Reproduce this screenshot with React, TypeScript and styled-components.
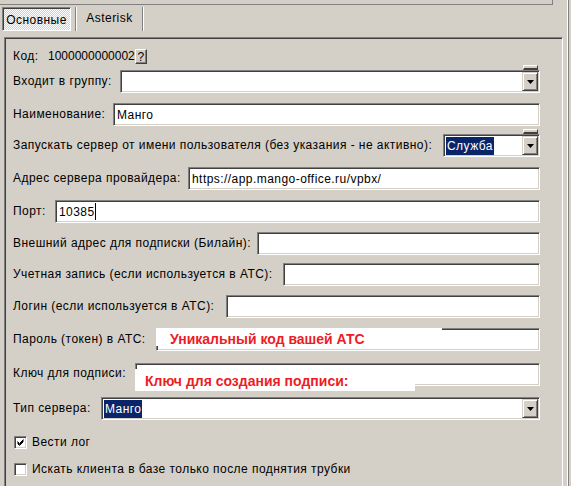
import React from 'react';
import styled, { createGlobalStyle } from 'styled-components';

const Global = createGlobalStyle`
  html, body { margin: 0; padding: 0; background: #d4d0c8; }
  body { font-family: "Liberation Sans", Arial, sans-serif; font-size: 12px; letter-spacing: 0.45px; color: #000; }
  #root { width: 571px; height: 486px; overflow: hidden; }
  * { box-sizing: border-box; }
`;

const Window = styled.div`
  display: flex;
  width: 571px;
  height: 486px;
  background: #d4d0c8;
  overflow: hidden;
`;

const Main = styled.div`
  width: 567px;
  display: flex;
  flex-direction: column;
`;

const RightFrame = styled.div`
  width: 2px;
  border-left: 1px solid #ffffff;
  border-right: 1px solid #808080;
`;

const TopStrip = styled.div`
  width: 553px;
  height: 5px;
  flex: none;
  border-bottom: 1px solid #808080;
  border-right: 1px solid #808080;
`;

const TabBar = styled.div`
  height: 32px;
  flex: none;
  display: flex;
  align-items: flex-start;
  padding: 2px 0 0 2px;
`;

const Tab = styled.div<{ $pressed?: boolean; $w: number }>`
  width: ${(p) => p.$w}px;
  height: 24px;
  display: flex;
  align-items: center;
  justify-content: center;
  padding-bottom: ${(p) => (p.$pressed ? 0 : 3)}px;
  ${(p) =>
    p.$pressed
      ? `
    border: 1px solid;
    border-color: #808080 #ffffff #ffffff #808080;
    box-shadow: inset 1px 1px #404040;
    background: repeating-conic-gradient(#ffffff 0 25%, #d4d0c8 0 50%) 0 0 / 2px 2px;
    padding-top: 2px;
  `
      : ''}
`;

const TabSep = styled.div<{ $ml: number }>`
  width: 2px;
  height: 24px;
  margin-left: ${(p) => p.$ml}px;
  border-left: 1px solid #808080;
  border-right: 1px solid #ffffff;
`;

const Panel = styled.div`
  margin-left: 4px;
  width: 559px;
  flex: 1;
  border-top: 1px solid #808080;
  border-left: 1px solid #808080;
  border-right: 1px solid #ffffff;
  box-shadow: inset 1px 1px #404040;
  padding: 10px 22px 0 8px;
  display: flex;
  flex-direction: column;
`;

const Row = styled.div<{ $mt: number; $h?: number }>`
  display: flex;
  align-items: center;
  height: ${(p) => p.$h ?? 23}px;
  margin-top: ${(p) => p.$mt}px;
  flex: none;
`;

const Label = styled.div<{ $w: number; $up?: number }>`
  width: ${(p) => p.$w}px;
  flex: none;
  white-space: nowrap;
  padding-bottom: ${(p) => p.$up ?? 2}px;
`;

const CodeValue = styled.span`
  white-space: nowrap;
  letter-spacing: 0;
`;

const HelpButton = styled.div`
  width: 12px;
  height: 15px;
  display: flex;
  align-items: center;
  justify-content: center;
  border: 1px solid;
  border-color: #ffffff #404040 #404040 #ffffff;
  box-shadow: inset -1px -1px #808080;
  font-size: 12px;
  line-height: 12px;
  letter-spacing: 0;
  margin-top: 1px;
`;

const sunken = `
  border: 1px solid;
  border-color: #808080 #ffffff #ffffff #808080;
  box-shadow: inset 1px 1px #404040, inset -1px -1px #d4d0c8;
`;

const Field = styled.div`
  position: relative;
  flex: 1;
  height: 23px;
  background: #ffffff;
  ${sunken}
  display: flex;
  align-items: center;
  padding: 1px 0 1px 3px;
  white-space: nowrap;
`;

const Caret = styled.span`
  display: inline-block;
  width: 1px;
  height: 17px;
  background: #000;
  margin-left: 0;
`;

const Combo = styled.div`
  position: relative;
  flex: 1;
  height: 23px;
  background: #ffffff;
  ${sunken}
  display: flex;
  align-items: stretch;
  padding: 1px;
`;

const ComboValue = styled.div`
  flex: 1;
  display: flex;
  align-items: center;
  padding-left: 1px;
`;

const Selected = styled.span`
  background: #0a246a;
  color: #ffffff;
  padding: 0 1px;
  line-height: 18px;
`;

const DropButton = styled.div`
  width: 16px;
  display: flex;
  align-items: center;
  justify-content: center;
  background: #d4d0c8;
  border: 1px solid;
  border-color: #d4d0c8 #404040 #404040 #d4d0c8;
  box-shadow: inset 1px 1px #ffffff, inset -1px -1px #808080;
`;

const GripTab = styled.div`
  position: absolute;
  top: -6px;
  right: 1px;
  width: 15px;
  height: 5px;
  background: #d4d0c8;
  border-top: 1px solid #ffffff;
  border-left: 1px solid #ffffff;
  border-right: 1px solid #404040;
  border-bottom: 2px solid #404040;
`;

const Annotation = styled.div<{ $l: number; $t: number; $w: number; $h: number; $pl: number; $pt: number }>`
  position: absolute;
  left: ${(p) => p.$l}px;
  top: ${(p) => p.$t}px;
  width: ${(p) => p.$w}px;
  height: ${(p) => p.$h}px;
  background: #ffffff;
  padding: ${(p) => p.$pt}px 0 0 ${(p) => p.$pl}px;
  color: #ee1c25;
  font-weight: bold;
  font-size: 14px;
  line-height: 16px;
  letter-spacing: 0;
  white-space: nowrap;
`;

const CheckRow = styled.div<{ $mt: number }>`
  display: flex;
  align-items: center;
  height: 13px;
  margin-top: ${(p) => p.$mt}px;
  padding-left: 1px;
  flex: none;
`;

const CheckBox = styled.div`
  width: 13px;
  height: 13px;
  background: #ffffff;
  ${sunken}
  display: flex;
  align-items: center;
  justify-content: center;
  margin-right: 5px;
`;

const CheckText = styled.span`
  white-space: nowrap;
  padding-bottom: 1px;
`;

const Arrow = () => (
  <svg width="7" height="4" viewBox="0 0 7 4">
    <polygon points="0,0 7,0 3.5,4" fill="#000" />
  </svg>
);

const Tick = () => (
  <svg width="7" height="7" viewBox="0 0 7 7">
    <path d="M0.5 2.5 L2.5 4.5 L6.5 0.5 M0.5 3.5 L2.5 5.5 L6.5 1.5 M0.5 4.5 L2.5 6.5 L6.5 2.5" stroke="#000" strokeWidth="1" fill="none" />
  </svg>
);

type ComboProps = { value: string; selected?: boolean; grip?: boolean };

const ComboBox = ({ value, selected, grip }: ComboProps) => (
  <Combo>
    {grip && <GripTab />}
    <ComboValue>{value && (selected ? <Selected>{value}</Selected> : value)}</ComboValue>
    <DropButton>
      <Arrow />
    </DropButton>
  </Combo>
);

const CheckItem = ({ mt, checked, text }: { mt: number; checked?: boolean; text: string }) => (
  <CheckRow $mt={mt}>
    <CheckBox>{checked && <Tick />}</CheckBox>
    <CheckText>{text}</CheckText>
  </CheckRow>
);

export default function App() {
  return (
    <>
      <Global />
      <Window>
        <Main>
          <TopStrip />
          <TabBar>
            <Tab $pressed $w={69}>Основные</Tab>
            <TabSep $ml={4} />
            <Tab $w={65}>Asterisk</Tab>
            <TabSep $ml={0} />
          </TabBar>
          <Panel>
            <Row $mt={0} $h={16}>
              <Label $w={35} $up={0}>Код:</Label>
              <CodeValue>1000000000002</CodeValue>
              <HelpButton>?</HelpButton>
            </Row>
            <Row $mt={6}>
              <Label $w={107}>Входит в группу:</Label>
              <ComboBox value="" grip />
            </Row>
            <Row $mt={10}>
              <Label $w={100}>Наименование:</Label>
              <Field>Манго</Field>
            </Row>
            <Row $mt={8}>
              <Label $w={430}>Запускать сервер от имени пользователя (без указания - не активно):</Label>
              <ComboBox value="Служба" selected grip />
            </Row>
            <Row $mt={10}>
              <Label $w={175}>Адрес сервера провайдера:</Label>
              <Field>https://app.mango-office.ru/vpbx/</Field>
            </Row>
            <Row $mt={10}>
              <Label $w={42}>Порт:</Label>
              <Field>
                10385
                <Caret />
              </Field>
            </Row>
            <Row $mt={9}>
              <Label $w={244}>Внешний адрес для подписки (Билайн):</Label>
              <Field />
            </Row>
            <Row $mt={8}>
              <Label $w={270}>Учетная запись (если используется в АТС):</Label>
              <Field />
            </Row>
            <Row $mt={9}>
              <Label $w={213}>Логин (если используется в АТС):</Label>
              <Field />
            </Row>
            <Row $mt={10}>
              <Label $w={143}>Пароль (токен) в АТС:</Label>
              <Field>
                <Annotation $l={-1} $t={-1} $w={286} $h={18} $pl={14} $pt={3}>
                  Уникальный код вашей АТС
                </Annotation>
              </Field>
            </Row>
            <Row $mt={12}>
              <Label $w={122} $up={4}>Ключ для подписи:</Label>
              <Field>
                <Annotation $l={-1} $t={5} $w={280} $h={22} $pl={10} $pt={4}>
                  Ключ для создания подписи:
                </Annotation>
              </Field>
            </Row>
            <Row $mt={11}>
              <Label $w={88}>Тип сервера:</Label>
              <ComboBox value="Манго" selected />
            </Row>
            <CheckItem mt={16} checked text="Вести лог" />
            <CheckItem mt={14} text="Искать клиента в базе только после поднятия трубки" />
          </Panel>
        </Main>
        <RightFrame />
      </Window>
    </>
  );
}
